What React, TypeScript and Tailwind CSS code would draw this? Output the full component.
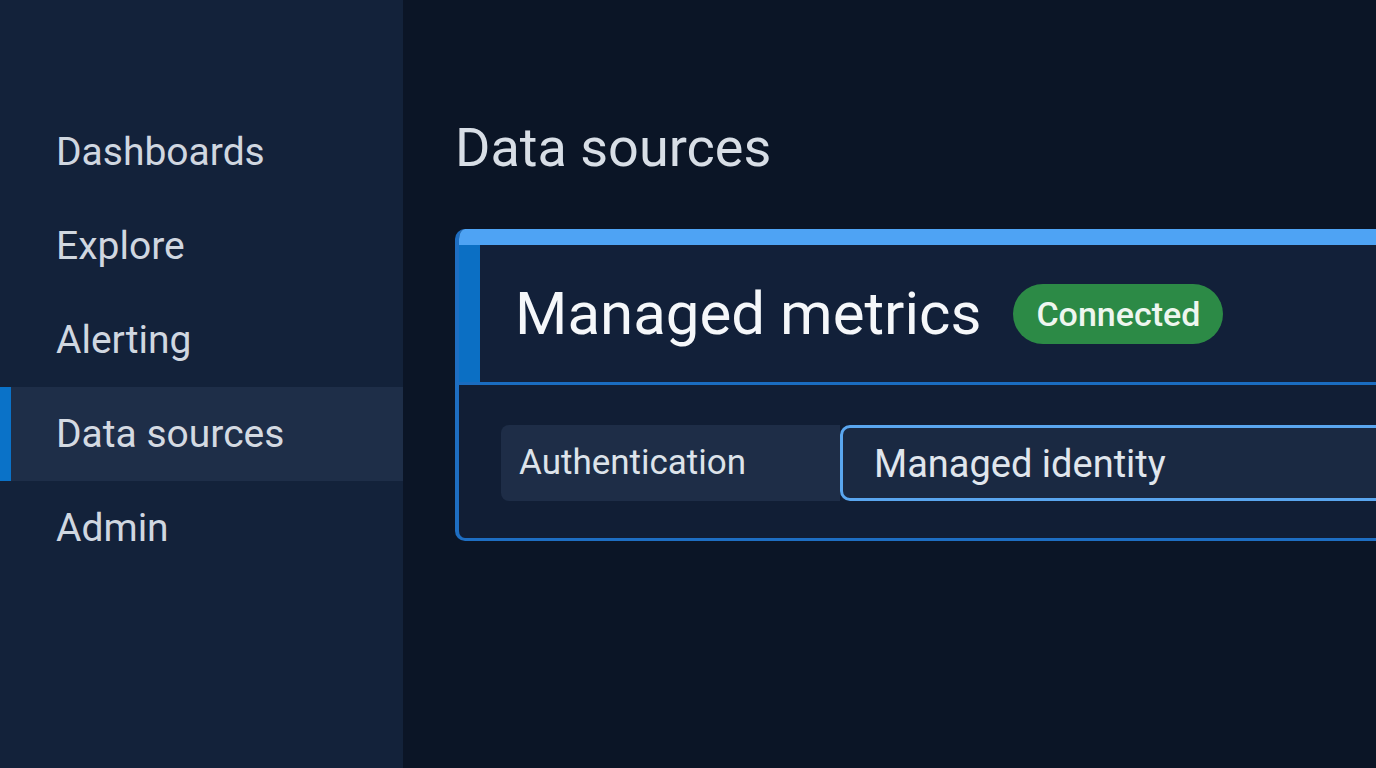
import React from "react";

const navItems = ["Dashboards", "Explore", "Alerting", "Data sources", "Admin"];

export default function App() {
  return (
    <div className="flex h-[768px] w-[1376px] overflow-hidden font-['Roboto',_'Liberation_Sans',_sans-serif]">
      <aside className="w-[403px] shrink-0 bg-[#13223a] pt-[105px]">
        {navItems.map((item) => {
          const active = item === "Data sources";
          return (
            <div
              key={item}
              className={
                active
                  ? "relative flex h-[94px] items-center bg-[#1e2e48] pl-[56px] text-[39px] text-[#d4dae2]"
                  : "relative flex h-[94px] items-center pl-[56px] text-[39px] text-[#d0d7e0]"
              }
            >
              {active && <div className="absolute left-0 top-0 h-full w-[11px] bg-[#0a72c8]" />}
              <span className="leading-none">{item}</span>
            </div>
          );
        })}
      </aside>
      <main className="flex-1 overflow-hidden bg-[#0b1526] pl-[52px] pt-[121px]">
        <h1 className="text-[54px] leading-none text-[#d8dee6]">Data sources</h1>
        <div className="mt-[54px] w-[1000px] overflow-hidden rounded-l-[10px] border-b-[3px] border-l-[4px] border-[#1e6ec2] bg-[#111e35]">
          <div className="h-[16px] bg-[#4ea3f4]" />
          <div className="flex h-[140px] items-stretch border-b-[3px] border-[#1a6cc0] bg-[#122039]">
            <div className="w-[21px] bg-[#0b6fc4]" />
            <div className="flex items-center pl-[35px]">
              <span className="text-[60px] leading-none text-[#f5f7fa]">Managed metrics</span>
              <span className="ml-[32px] flex h-[60px] items-center rounded-full bg-[#2c8a46] px-[23px] text-[34px] font-medium leading-none text-[#eef6ef]">
                Connected
              </span>
            </div>
          </div>
          <div className="h-[153px] pl-[42px] pt-[40px]">
            <div className="flex h-[76px] w-full items-stretch">
              <div className="flex w-[339px] shrink-0 items-center rounded-l-[8px] bg-[#1e2d47] pl-[18px] text-[35px] text-[#dde3ea]">
                Authentication
              </div>
              <div className="flex flex-1 items-center rounded-[10px] border-[3px] border-[#5aa6ef] bg-[#1a2942] pl-[31px] pt-[3px] text-[38px] text-[#e0e6ed]">
                Managed identity
              </div>
            </div>
          </div>
        </div>
      </main>
    </div>
  );
}
